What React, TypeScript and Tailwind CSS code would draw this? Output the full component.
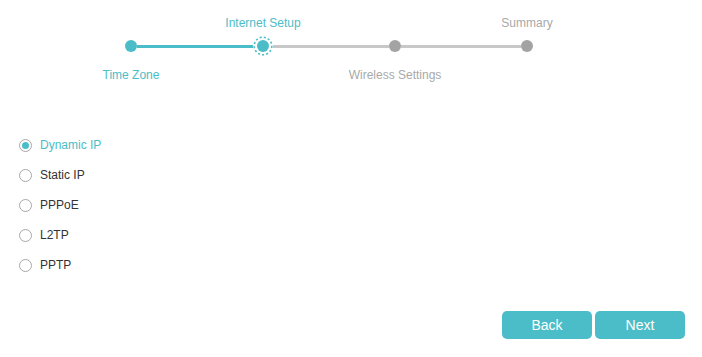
import React from "react";

const TEAL = "#4bbdc8";

type Step = { label: string; pos: "top" | "bottom"; state: "done" | "current" | "todo" };

const steps: Step[] = [
  { label: "Time Zone", pos: "bottom", state: "done" },
  { label: "Internet Setup", pos: "top", state: "current" },
  { label: "Wireless Settings", pos: "bottom", state: "todo" },
  { label: "Summary", pos: "top", state: "todo" },
];

function Dot({ state }: { state: Step["state"] }) {
  if (state === "current") {
    return (
      <svg width="20" height="20" viewBox="0 0 20 20" className="shrink-0">
        <circle cx="10" cy="10" r="8.8" fill="none" stroke={TEAL} strokeWidth="1.6" strokeDasharray="2.1 2.1" />
        <circle cx="10" cy="10" r="6" fill={TEAL} />
      </svg>
    );
  }
  return (
    <div
      className={
        "w-[12px] h-[12px] rounded-full shrink-0 " +
        (state === "done" ? "bg-[#4bbdc8]" : "bg-[#a3a3a3]")
      }
    />
  );
}

const options = ["Dynamic IP", "Static IP", "PPPoE", "L2TP", "PPTP"];

export default function App() {
  return (
    <div
      className="w-[702px] h-[357px] bg-white flex flex-col"
      style={{ fontFamily: '"Liberation Sans", Arial, sans-serif' }}
    >
      {/* stepper */}
      <div className="flex pl-[65px] pt-[15px]">
        {steps.map((s, i) => {
          const leftColor =
            i === 0 ? "bg-transparent" : i <= 1 ? "bg-[#4bbdc8]" : "bg-[#c8c8c8]";
          const rightColor =
            i === steps.length - 1 ? "bg-transparent" : i < 1 ? "bg-[#4bbdc8]" : "bg-[#c8c8c8]";
          const labelColor = s.state === "todo" ? "text-[#a9a9a9]" : "text-[#4bbdc8]";
          return (
            <div key={s.label} className="w-[132px] flex flex-col items-center">
              <div className={"h-[16px] text-[12px] leading-[16px] whitespace-nowrap " + labelColor}>
                {s.pos === "top" ? s.label : ""}
              </div>
              <div className="mt-[5px] h-[20px] w-full flex items-center">
                <div className={"flex-1 h-[3px] " + leftColor} />
                <Dot state={s.state} />
                <div className={"flex-1 h-[3px] " + rightColor} />
              </div>
              <div className={"mt-[11px] h-[16px] text-[12px] leading-[16px] whitespace-nowrap " + labelColor}>
                {s.pos === "bottom" ? s.label : ""}
              </div>
            </div>
          );
        })}
      </div>

      {/* radio list */}
      <div className="mt-[47px] pl-[19px] flex flex-col">
        {options.map((o, i) => {
          const sel = i === 0;
          return (
            <div key={o} className="h-[30px] flex items-center gap-[8px]">
              <div className="w-[13px] h-[13px] rounded-full border border-[#a8a8a8] flex items-center justify-center bg-white">
                {sel && <div className="w-[7px] h-[7px] rounded-full bg-[#4bbdc8]" />}
              </div>
              <span className={"text-[12px] leading-[16px] " + (sel ? "text-[#4bbdc8]" : "text-[#333333]")}>
                {o}
              </span>
            </div>
          );
        })}
      </div>

      {/* buttons */}
      <div className="mt-[31px] flex justify-end gap-[3px] pr-[17px]">
        <button className="w-[90px] h-[28px] rounded-[5px] bg-[#4bbdc8] text-white text-[14px]">
          Back
        </button>
        <button className="w-[90px] h-[28px] rounded-[5px] bg-[#4bbdc8] text-white text-[14px]">
          Next
        </button>
      </div>
    </div>
  );
}
